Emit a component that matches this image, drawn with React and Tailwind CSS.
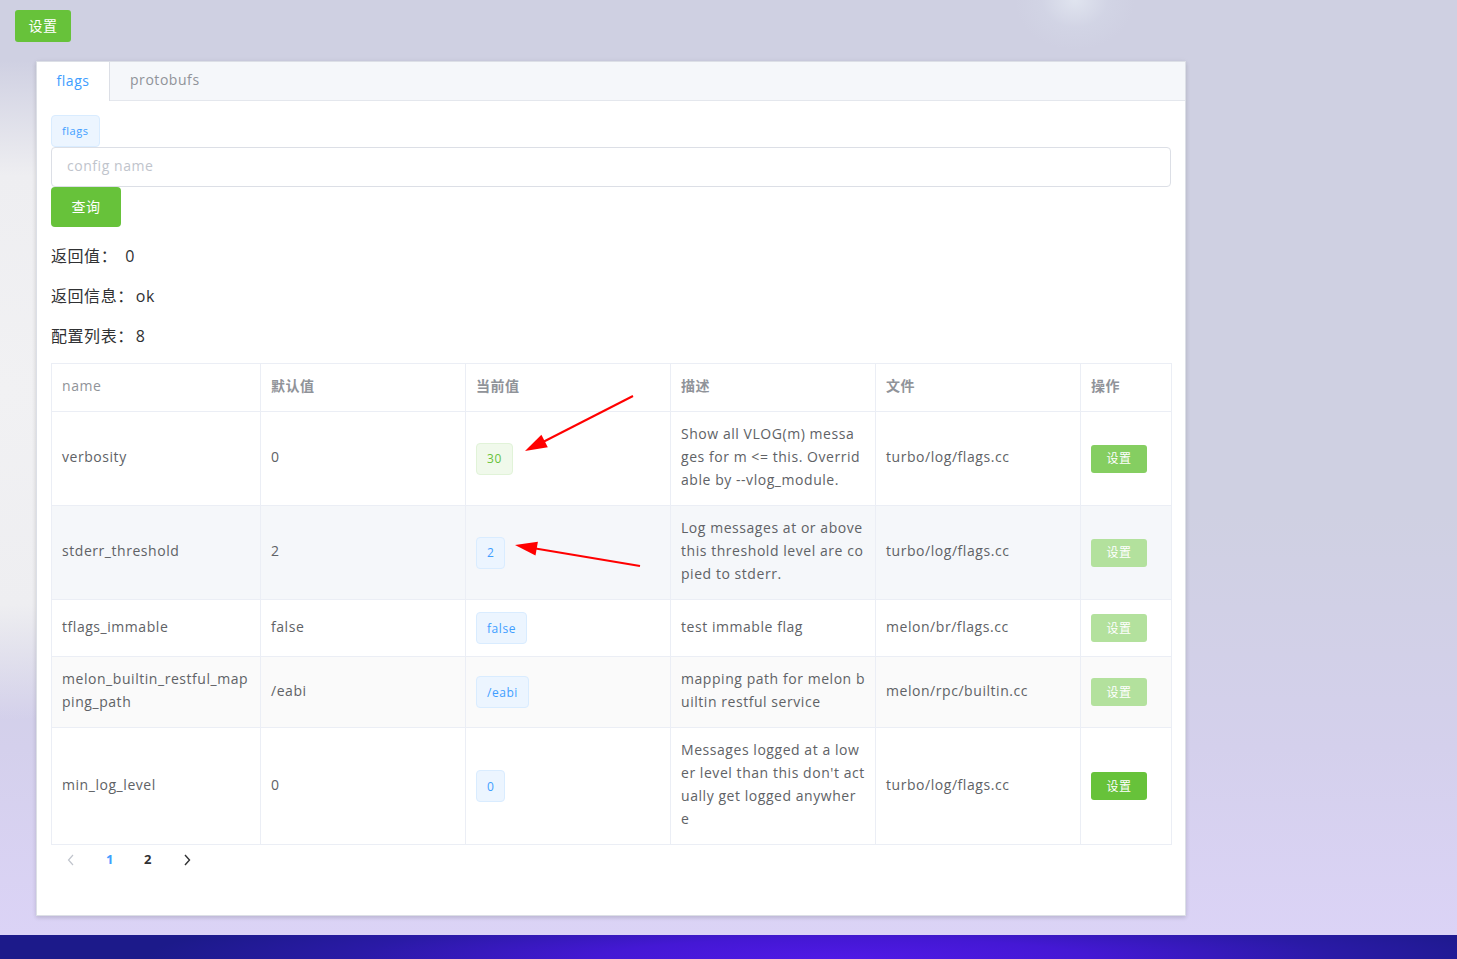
import React from "react";

const rows = [
  {
    name: ["verbosity"],
    def: "0",
    cur: "30",
    tag: "green",
    desc: ["Show all VLOG(m) messa", "ges for m <= this. Overrid", "able by --vlog_module."],
    file: "turbo/log/flags.cc",
    btn: "hover",
    bg: "bg-white",
  },
  {
    name: ["stderr_threshold"],
    def: "2",
    cur: "2",
    tag: "blue",
    desc: ["Log messages at or above", "this threshold level are co", "pied to stderr."],
    file: "turbo/log/flags.cc",
    btn: "disabled",
    bg: "bg-[#f5f7fa]",
  },
  {
    name: ["tflags_immable"],
    def: "false",
    cur: "false",
    tag: "blue",
    desc: ["test immable flag"],
    file: "melon/br/flags.cc",
    btn: "disabled",
    bg: "bg-white",
  },
  {
    name: ["melon_builtin_restful_map", "ping_path"],
    def: "/eabi",
    cur: "/eabi",
    tag: "blue",
    desc: ["mapping path for melon b", "uiltin restful service"],
    file: "melon/rpc/builtin.cc",
    btn: "disabled",
    bg: "bg-[#fafafa]",
  },
  {
    name: ["min_log_level"],
    def: "0",
    cur: "0",
    tag: "blue",
    desc: ["Messages logged at a low", "er level than this don't act", "ually get logged anywher", "e"],
    file: "turbo/log/flags.cc",
    btn: "normal",
    bg: "bg-white",
  },
];

const btnColors = {
  normal: "bg-[#67c23a]",
  hover: "bg-[#85ce61]",
  disabled: "bg-[#b3e19d]",
};

const Tag = ({ color, children }) => (
  <span
    className={
      color === "green"
        ? "inline-flex h-8 items-center px-[10px] rounded-[4px] border border-[#e1f3d8] bg-[#f0f9eb] text-[#67c23a] text-[12px]"
        : "inline-flex h-8 items-center px-[10px] rounded-[4px] border border-[#d9ecff] bg-[#ecf5ff] text-[#409eff] text-[12px]"
    }
  >
    {children}
  </span>
);

const Lines = ({ lines }) => (
  <div>
    {lines.map((l, i) => (
      <div key={i} className="whitespace-nowrap">
        {l}
      </div>
    ))}
  </div>
);

// text cells sit a touch high, like the original font's metrics
const cell = "px-[10px] pt-[10px] pb-[14px] align-middle border border-[#ebeef5]";
const boxCell = "px-[10px] py-3 align-middle border border-[#ebeef5]";

const App = () => {
  return (
    <div className="relative w-full h-[959px] flex flex-col overflow-hidden tracking-[0.55px] font-['Open_Sans','Noto_Sans_CJK_SC',sans-serif]">
      {/* Wallpaper */}
      <div className="flex-1 px-[15px] pt-[10px] bg-[radial-gradient(60px_50px_at_1075px_0px,rgba(228,233,242,0.8)_0%,rgba(215,220,234,0.35)_55%,rgba(207,208,226,0)_100%),radial-gradient(620px_330px_at_0px_390px,#f1f1f3_0%,#eeeef1_65%,rgba(238,238,241,0)_100%),linear-gradient(180deg,#cfd0e2_0%,#cfd0e2_55%,#d4d0ec_80%,#dbd3f6_100%)]">
        <button className="w-[56px] h-8 pb-[2px] rounded-[3px] bg-[#67c23a] text-white text-[14px]">设置</button>

        {/* Card */}
        <div className="ml-[21px] mt-[19px] w-[1150px] h-[855px] bg-white border border-[#dcdfe6] shadow-[0_2px_4px_rgba(0,0,0,0.12),0_0_6px_rgba(0,0,0,0.04)]">
          {/* Tabs */}
          <div className="flex h-[39px] bg-[#f5f7fa] border-b border-[#e4e7ed] text-[14px]">
            <div className="w-[73px] h-[39px] pb-[3px] bg-white border-r border-[#dcdfe6] flex items-center justify-center text-[#409eff]">
              flags
            </div>
            <div className="px-5 pb-[3px] flex items-center text-[#909399]">protobufs</div>
          </div>

          {/* Content */}
          <div className="px-[14px] pt-[14px]">
            <span className="inline-flex h-8 items-center px-[10px] rounded-[4px] border border-[#d9ecff] bg-[#ecf5ff] text-[#409eff] text-[11px]">
              flags
            </span>
            <div className="h-10 w-[1120px] pb-[3px] rounded-[4px] border border-[#dcdfe6] flex items-center px-[15px] text-[14px] text-[#c0c4cc]">
              config name
            </div>
            <button className="w-[70px] h-10 pb-[2px] rounded-[4px] bg-[#67c23a] text-white text-[14px]">查询</button>

            <div className="mt-[9px] text-[16px] text-[#303133]">
              <div className="h-10 flex items-center">
                返回值：<span className="ml-[8px]">0</span>
              </div>
              <div className="h-10 flex items-center">
                返回信息：<span className="ml-[2px]">ok</span>
              </div>
              <div className="h-10 flex items-center">
                配置列表：<span className="ml-[2px]">8</span>
              </div>
            </div>

            {/* Table */}
            <table className="mt-[7px] w-[1120px] table-fixed border-collapse border border-[#ebeef5] text-[14px] leading-[23px]">
              <colgroup>
                <col className="w-[209px]" />
                <col className="w-[205px]" />
                <col className="w-[205px]" />
                <col className="w-[205px]" />
                <col className="w-[205px]" />
                <col className="w-[91px]" />
              </colgroup>
              <thead>
                <tr className="text-left text-[#909399]">
                  <th className={`${cell} font-normal`}>name</th>
                  <th className={`${cell} font-bold`}>默认值</th>
                  <th className={`${cell} font-bold`}>当前值</th>
                  <th className={`${cell} font-bold`}>描述</th>
                  <th className={`${cell} font-bold`}>文件</th>
                  <th className={`${cell} font-bold`}>操作</th>
                </tr>
              </thead>
              <tbody className="text-[#606266]">
                {rows.map((r, i) => (
                  <tr key={i} className={r.bg}>
                    <td className={cell}>
                      <Lines lines={r.name} />
                    </td>
                    <td className={cell}>{r.def}</td>
                    <td className={boxCell}>
                      <Tag color={r.tag}>{r.cur}</Tag>
                    </td>
                    <td className={cell}>
                      <Lines lines={r.desc} />
                    </td>
                    <td className={cell}>{r.file}</td>
                    <td className={boxCell}>
                      <button className={`block w-[56px] h-7 rounded-[3px] text-white text-[12px] ${btnColors[r.btn]}`}>
                        设置
                      </button>
                    </td>
                  </tr>
                ))}
              </tbody>
            </table>

            {/* Pagination */}
            <div className="flex items-center h-[30px] text-[13px] font-bold">
              <span className="w-[40px] flex justify-center text-[#c0c4cc]">
                <svg width="10" height="12" viewBox="0 0 10 12" fill="none" stroke="currentColor" strokeWidth="1.2">
                  <path d="M7 1 L2.5 6 L7 11" />
                </svg>
              </span>
              <span className="w-[38px] flex justify-center text-[#409eff]">1</span>
              <span className="w-[38px] flex justify-center text-[#303133]">2</span>
              <span className="w-[40px] flex justify-center text-[#303133]">
                <svg width="10" height="12" viewBox="0 0 10 12" fill="none" stroke="currentColor" strokeWidth="1.4">
                  <path d="M3 1 L7.5 6 L3 11" />
                </svg>
              </span>
            </div>
          </div>
        </div>
      </div>

      {/* Taskbar strip */}
      <div className="h-[24px] bg-[radial-gradient(ellipse_700px_60px_at_58%_100%,#5019e6_0%,#4418d4_35%,#2a1aa6_70%,#1c1a8a_100%)]" />

      {/* Red annotation arrows */}
      <svg className="absolute left-0 top-0 pointer-events-none" width="1457" height="959">
        <line x1="633" y1="396" x2="542" y2="442.5" stroke="#ff0000" strokeWidth="2" />
        <polygon points="525,451 547.8,447.2 541.4,434.8" fill="#ff0000" />
        <line x1="640" y1="566" x2="534" y2="548.2" stroke="#ff0000" strokeWidth="2" />
        <polygon points="515,545 535.5,555.5 537.9,541.7" fill="#ff0000" />
      </svg>
    </div>
  );
};

export default App;
